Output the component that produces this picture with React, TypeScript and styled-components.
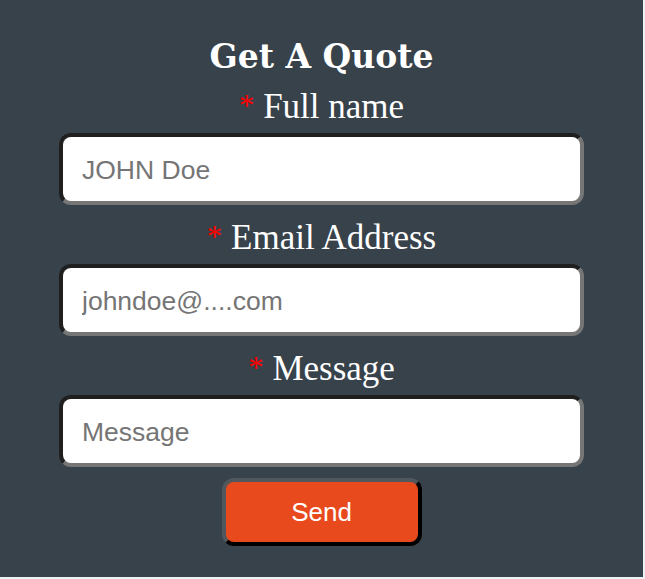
import React from "react";
import styled, { createGlobalStyle } from "styled-components";

const Global = createGlobalStyle`
  html, body { margin: 0; padding: 0; background: #eef1f4; }
  * { box-sizing: border-box; }
`;

const Panel = styled.div`
  width: 643px;
  height: 577px;
  background: #37424b;
  padding-top: 37px;
  display: flex;
  flex-direction: column;
  align-items: center;
`;

const Title = styled.h2`
  margin: 0;
  font-family: "DejaVu Serif", Georgia, serif;
  font-weight: bold;
  font-size: 33px;
  line-height: 40px;
  color: #ffffff;
`;

const Form = styled.form`
  display: flex;
  flex-direction: column;
  align-items: center;
  gap: 13px;
  margin-top: 10px;
`;

const Field = styled.div`
  display: flex;
  flex-direction: column;
  align-items: center;
  gap: 6px;
`;

const Label = styled.label`
  display: block;
  height: 40px;
  font-family: "Liberation Serif", Georgia, serif;
  font-size: 35px;
  line-height: 40px;
  color: #ffffff;
`;

const Star = styled.span`
  color: #ff0000;
  font-size: 31px;
  line-height: 0;
  vertical-align: 2px;
`;

const Input = styled.input`
  width: 525px;
  height: 72px;
  border-style: solid;
  border-width: 4px;
  border-color: #1f1f1f #767676 #767676 #1f1f1f;
  border-radius: 12px;
  background: #ffffff;
  padding: 2px 19px 0;
  font-family: "Liberation Sans", Arial, sans-serif;
  font-size: 26.5px;
  color: #222;
  outline: none;
  &::placeholder { color: #757575; }
`;

const Button = styled.button`
  margin-top: -2px;
  width: 200px;
  height: 68px;
  border-style: solid;
  border-width: 4px;
  border-color: #50575d #000000 #000000 #50575d;
  border-radius: 12px;
  background: #e84a1e;
  color: #ffffff;
  font-family: "Liberation Sans", Arial, sans-serif;
  font-size: 26px;
  cursor: pointer;
`;

const fields = [
  { id: "name", label: "Full name", placeholder: "JOHN Doe" },
  { id: "email", label: "Email Address", placeholder: "johndoe@....com" },
  { id: "message", label: "Message", placeholder: "Message" },
];

export default function App() {
  return (
    <>
      <Global />
      <Panel>
        <Title>Get A Quote</Title>
        <Form onSubmit={(e) => e.preventDefault()}>
          {fields.map((f) => (
            <Field key={f.id}>
              <Label htmlFor={f.id}>
                <Star>*</Star> {f.label}
              </Label>
              <Input id={f.id} placeholder={f.placeholder} />
            </Field>
          ))}
          <Button type="submit">Send</Button>
        </Form>
      </Panel>
    </>
  );
}
